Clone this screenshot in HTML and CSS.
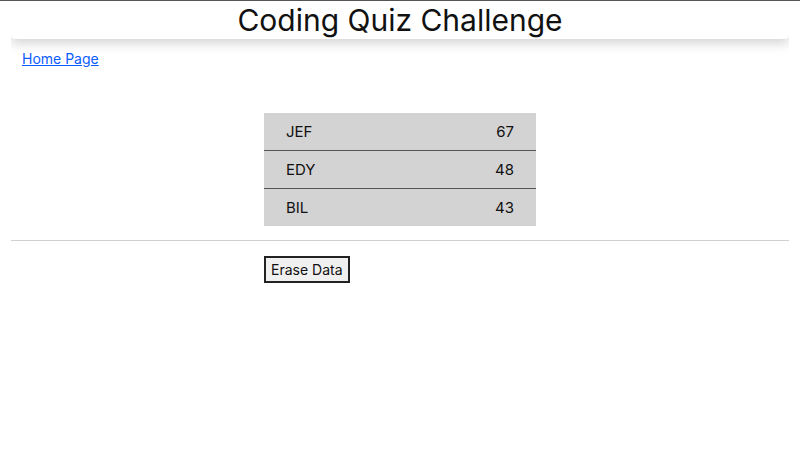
FILE: index.html
```html
<!DOCTYPE html>
<html>
<head>
<meta charset="utf-8">
<link rel="stylesheet" href="styles.css">
</head>
<body>
<header class="header"><h1 class="title">Coding Quiz Challenge</h1></header>
<nav class="nav"><a href="#" class="home">Home Page</a></nav>
<main class="main">
  <ul class="scores">
    <li class="row"><span>JEF</span><span>67</span></li>
    <li class="row"><span>EDY</span><span>48</span></li>
    <li class="row"><span>BIL</span><span>43</span></li>
  </ul>
</main>
<hr class="rule">
<div class="actions"><button class="erase">Erase Data</button></div>
</body>
</html>
```
FILE: styles.css
```css
html { border-top: 1px solid #555; }
body {
  margin: 0 11px;
  font-family: Inter, "Noto Sans", sans-serif;
  color: #111;
  background: #fff;
}
.header {
  background: #fff;
  box-shadow: 0 4px 12px rgba(0,0,0,0.18);
  border-radius: 0 0 4px 4px;
  height: 38px;
  display: flex;
  align-items: center;
  justify-content: center;
}
.title {
  margin: 0;
  font-weight: 400;
  font-size: 30px;
  line-height: 40px;
}
.nav { padding: 9px 11px 0; height: 20px; }
.home {
  color: #0b5cff;
  font-size: 14px;
  line-height: 20px;
}
.main { padding-top: 45px; display: flex; justify-content: center; }
.scores {
  list-style: none;
  margin: 0;
  padding: 0;
  width: 272px;
}
.row {
  background: #d3d3d3;
  height: 37px;
  padding: 0 22px;
  display: flex;
  align-items: center;
  justify-content: space-between;
  font-size: 15px;
}
.row + .row { border-top: 1px solid #555; }
.rule {
  margin: 14px 0 0;
  border: 0;
  border-top: 1px solid #d0d0d0;
}
.actions { padding-top: 15px; padding-left: 253px; }
.erase {
  font-family: Inter, "Noto Sans", sans-serif;
  font-size: 14px;
  color: #111;
  background: #f0f0f0;
  border: 2px solid #222;
  border-radius: 0;
  padding: 1px 5px;
  height: 27px;
}
```
